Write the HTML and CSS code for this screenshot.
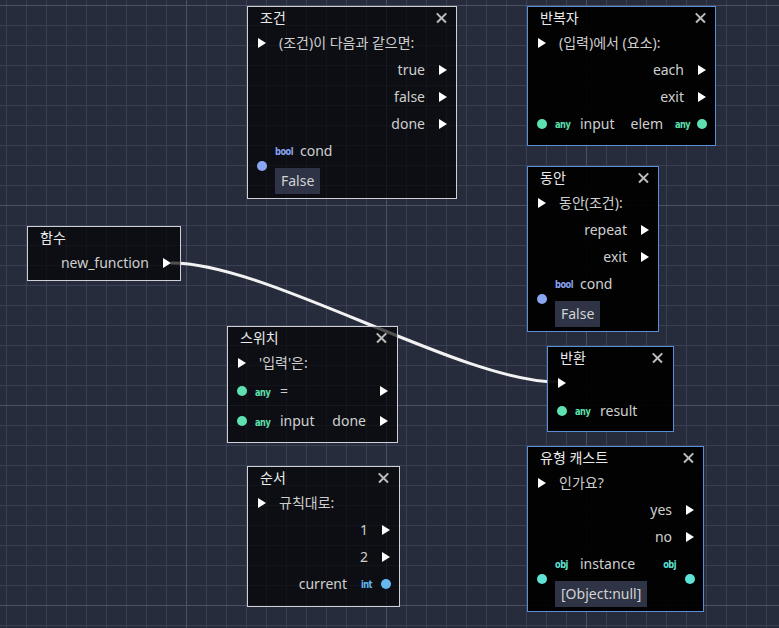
FILE: index.html
```html
<!DOCTYPE html>
<html lang="ko">
<head>
<meta charset="utf-8">
<title>Visual Script</title>
<link rel="stylesheet" href="styles.css">
</head>
<body>
<div class="canvas">
  <svg class="wires" width="779" height="628" viewBox="0 0 779 628">
    <path d="M172,263 C268,263 461,382 557,382" fill="none" stroke="#f2f2f2" stroke-width="3" stroke-linecap="round"/>
  </svg>

  <!-- 조건 -->
  <div class="node n-if">
    <div class="title"><span>조건</span><span class="close"></span></div>
    <div class="row"><span class="pl"><i class="tri"></i></span><span class="lbl-l">(조건)이 다음과 같으면:</span></div>
    <div class="row"><span class="sp"></span><span class="lbl-r">true</span><span class="pr"><i class="tri"></i></span></div>
    <div class="row"><span class="sp"></span><span class="lbl-r">false</span><span class="pr"><i class="tri"></i></span></div>
    <div class="row"><span class="sp"></span><span class="lbl-r">done</span><span class="pr"><i class="tri"></i></span></div>
    <div class="vslot">
      <span class="pl"><i class="dot c-bool"></i></span>
      <div class="vcol">
        <div class="row"><span class="ti c-bool">bool</span><span class="lbl-i">cond</span></div>
        <div class="val">False</div>
      </div>
    </div>
  </div>

  <!-- 반복자 -->
  <div class="node sel n-iter">
    <div class="title"><span>반복자</span><span class="close"></span></div>
    <div class="row"><span class="pl"><i class="tri"></i></span><span class="lbl-l">(입력)에서 (요소):</span></div>
    <div class="row"><span class="sp"></span><span class="lbl-r">each</span><span class="pr"><i class="tri"></i></span></div>
    <div class="row"><span class="sp"></span><span class="lbl-r">exit</span><span class="pr"><i class="tri"></i></span></div>
    <div class="row"><span class="pl"><i class="dot c-any"></i></span><span class="ti c-any">any</span><span class="lbl-i">input</span><span class="sp"></span><span class="lbl-ri">elem</span><span class="ti ti-r c-any">any</span><span class="pr"><i class="dot c-any"></i></span></div>
  </div>

  <!-- 동안 -->
  <div class="node sel n-while">
    <div class="title"><span>동안</span><span class="close"></span></div>
    <div class="row"><span class="pl"><i class="tri"></i></span><span class="lbl-l">동안(조건):</span></div>
    <div class="row"><span class="sp"></span><span class="lbl-r">repeat</span><span class="pr"><i class="tri"></i></span></div>
    <div class="row"><span class="sp"></span><span class="lbl-r">exit</span><span class="pr"><i class="tri"></i></span></div>
    <div class="vslot">
      <span class="pl"><i class="dot c-bool"></i></span>
      <div class="vcol">
        <div class="row"><span class="ti c-bool">bool</span><span class="lbl-i">cond</span></div>
        <div class="val">False</div>
      </div>
    </div>
  </div>

  <!-- 함수 -->
  <div class="node n-func">
    <div class="title"><span>함수</span></div>
    <div class="row"><span class="sp"></span><span class="lbl-r">new_function</span><span class="pr"><i class="tri"></i></span></div>
  </div>

  <!-- 스위치 -->
  <div class="node n-switch">
    <div class="title"><span>스위치</span><span class="close"></span></div>
    <div class="row"><span class="pl"><i class="tri"></i></span><span class="lbl-l">'입력'은:</span></div>
    <div class="row tall"><span class="pl"><i class="dot c-any"></i></span><span class="ti c-any">any</span><span class="lbl-i">=</span><span class="sp"></span><span class="pr"><i class="tri"></i></span></div>
    <div class="row tall"><span class="pl"><i class="dot c-any"></i></span><span class="ti c-any">any</span><span class="lbl-i">input</span><span class="sp"></span><span class="lbl-r">done</span><span class="pr"><i class="tri"></i></span></div>
  </div>

  <!-- 반환 -->
  <div class="node sel n-ret">
    <div class="title"><span>반환</span><span class="close"></span></div>
    <div class="row"><span class="pl"><i class="tri"></i></span></div>
    <div class="row tall2"><span class="pl"><i class="dot c-any"></i></span><span class="ti c-any">any</span><span class="lbl-i">result</span></div>
  </div>

  <!-- 순서 -->
  <div class="node n-seq">
    <div class="title"><span>순서</span><span class="close"></span></div>
    <div class="row"><span class="pl"><i class="tri"></i></span><span class="lbl-l">규칙대로:</span></div>
    <div class="row"><span class="sp"></span><span class="lbl-r">1</span><span class="pr"><i class="tri"></i></span></div>
    <div class="row"><span class="sp"></span><span class="lbl-r">2</span><span class="pr"><i class="tri"></i></span></div>
    <div class="row"><span class="sp"></span><span class="lbl-ri">current</span><span class="ti ti-r c-int">int</span><span class="pr"><i class="dot c-int"></i></span></div>
  </div>

  <!-- 유형 캐스트 -->
  <div class="node sel n-cast">
    <div class="title"><span>유형 캐스트</span><span class="close"></span></div>
    <div class="row"><span class="pl"><i class="tri"></i></span><span class="lbl-l">인가요?</span></div>
    <div class="row"><span class="sp"></span><span class="lbl-r">yes</span><span class="pr"><i class="tri"></i></span></div>
    <div class="row"><span class="sp"></span><span class="lbl-r">no</span><span class="pr"><i class="tri"></i></span></div>
    <div class="vslot">
      <span class="pl"><i class="dot c-obj"></i></span>
      <div class="vcol">
        <div class="row"><span class="ti c-obj">obj</span><span class="lbl-i">instance</span><span class="sp"></span><span class="ti ti-r c-obj">obj</span></div>
        <div class="val">[Object:null]</div>
      </div>
      <span class="pr"><i class="dot c-obj"></i></span>
    </div>
  </div>
</div>
</body>
</html>
```

FILE: styles.css
```css
html, body {
  margin: 0;
  padding: 0;
  width: 779px;
  height: 628px;
  overflow: hidden;
}

body {
  background-color: #262c3b;
  background-image:
    linear-gradient(to right, #4a5165 1px, transparent 1px),
    linear-gradient(to bottom, #4a5165 1px, transparent 1px),
    linear-gradient(to right, #3a4053 1px, transparent 1px),
    linear-gradient(to bottom, #3a4053 1px, transparent 1px);
  background-size: 200px 200px, 200px 200px, 20px 20px, 20px 20px;
  background-position: 186px 0, 0 5px, 6px 0, 0 5px;
  font-family: "Noto Sans", "Noto Sans CJK KR", sans-serif;
}

.canvas {
  position: relative;
  width: 779px;
  height: 628px;
}

.wires {
  position: absolute;
  left: 0;
  top: 0;
}

.node {
  position: absolute;
  box-sizing: border-box;
  border: 1px solid #cfd1d6;
  background: rgba(0, 0, 0, 0.67);
  display: flex;
  flex-direction: column;
  font-size: 14px;
  color: #cfcfcf;
  line-height: 1;
  white-space: nowrap;
}

.node.sel {
  border-color: #5a8dd8;
  background: rgba(0, 0, 0, 0.94);
}

.n-if     { left: 247px; top: 6px;   width: 210px; height: 193px; }
.n-iter   { left: 527px; top: 6px;   width: 189px; height: 140px; }
.n-while  { left: 527px; top: 166px; width: 132px; height: 166px; }
.n-func   { left: 27px;  top: 226px; width: 154px; height: 55px; }
.n-switch { left: 227px; top: 326px; width: 171px; height: 117px; }
.n-ret    { left: 547px; top: 346px; width: 127px; height: 86px; }
.n-seq    { left: 247px; top: 466px; width: 153px; height: 141px; }
.n-cast   { left: 527px; top: 446px; width: 177px; height: 166px; }

.title {
  height: 22px;
  flex: none;
  display: flex;
  align-items: center;
  justify-content: space-between;
  padding: 0 9px 0 12px;
  color: #eaeaea;
}

.n-switch .title, .n-seq .title, .n-ret .title {
  padding-right: 10px;
}

.close {
  position: relative;
  width: 11px;
  height: 11px;
}

.close::before, .close::after {
  content: "";
  position: absolute;
  left: -1px;
  top: 4.5px;
  width: 13px;
  height: 1.6px;
  background: #bcbcbc;
  transform: rotate(45deg);
}

.close::after {
  transform: rotate(-45deg);
}

.row {
  height: 27px;
  flex: none;
  display: flex;
  align-items: center;
}

.row.tall { height: 30px; }
.row.tall2 { height: 29px; }

.pl {
  width: 27px;
  flex: none;
  display: flex;
  justify-content: center;
  align-items: center;
}

.pr {
  width: 26px;
  flex: none;
  display: flex;
  justify-content: center;
  align-items: center;
}

.sp { flex: 1; }

.lbl-l { margin-left: 4px; }
.lbl-r { margin-right: 5px; }
.lbl-i { margin-left: 9px; }
.lbl-ri { margin-right: 9px; }

.tri {
  display: block;
  width: 0;
  height: 0;
  border-left: 8px solid #ffffff;
  border-top: 5px solid transparent;
  border-bottom: 5px solid transparent;
}

.dot {
  display: block;
  width: 10px;
  height: 10px;
  border-radius: 50%;
  background: currentColor;
}

.ti {
  width: 16px;
  flex: none;
  margin-top: 3px;
  font-family: "DejaVu Sans", sans-serif;
  font-weight: bold;
  font-size: 10px;
  letter-spacing: -0.6px;
  text-align: left;
  transform: scaleX(0.82);
  transform-origin: left center;
}

.ti-r {
  margin-right: 1px;
  text-align: right;
  transform-origin: right center;
}

.c-any  { color: #5fe0b0; }
.c-bool { color: #8aa5f2; }
.c-int  { color: #66b8f2; }
.c-obj  { color: #5fe3d6; }

.vslot {
  display: flex;
  align-items: center;
  flex: none;
}

.vcol {
  flex: 1;
  display: flex;
  flex-direction: column;
}

.val {
  align-self: flex-start;
  height: 26px;
  margin-top: 4px;
  padding: 0 6px;
  background: #2e3445;
  color: #d2d2d2;
  display: flex;
  align-items: center;
}
```
